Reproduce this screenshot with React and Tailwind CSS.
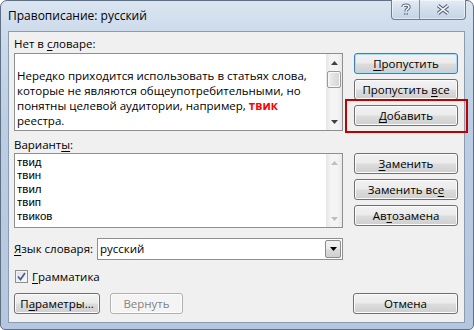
import React from "react";

const font = { fontFamily: '"Segoe UI", "Open Sans", "Liberation Sans", sans-serif' };

function Btn({ children, className = "", primary, disabled }) {
  const border = primary
    ? "border-[#3c7fb1] shadow-[inset_0_0_0_1px_#a8def9]"
    : disabled
    ? "border-[#adb2b5] shadow-[inset_0_0_0_1px_#fcfcfc]"
    : "border-[#707070] shadow-[inset_0_0_0_1px_#fbfbfb]";
  const bg = disabled
    ? "bg-[#f4f4f4] text-[#838383]"
    : "bg-[linear-gradient(#f2f2f2_0%,#ebebeb_48%,#dddddd_52%,#cfcfcf_100%)] text-black";
  return (
    <div
      className={`flex items-center justify-center whitespace-nowrap rounded-[3px] border text-[11.5px] leading-none ${border} ${bg} ${className}`}
    >
      {children}
    </div>
  );
}

function U({ children }) {
  return <span className="underline underline-offset-[2px] decoration-1">{children}</span>;
}

function Arrow({ up, color = "#404040" }) {
  return (
    <svg width="7" height="4" viewBox="0 0 7 4">
      {up ? (
        <path d="M0 4 L3.5 0 L7 4 Z" fill={color} />
      ) : (
        <path d="M0 0 L3.5 4 L7 0 Z" fill={color} />
      )}
    </svg>
  );
}

function ScrollBar({ disabled }) {
  return (
    <div className="flex h-full w-[16px] flex-col bg-[linear-gradient(to_right,#e6e6e6,#f4f4f4_30%,#f4f4f4_70%,#e9e9e9)]">
      <div className="flex h-[17px] items-center justify-center">
        <Arrow up color={disabled ? "#bfbfbf" : "#404040"} />
      </div>
      {!disabled && (
        <div className="mx-[1px] h-[17px] rounded-[2px] border border-[#9a9a9a] bg-[linear-gradient(to_right,#f1f1f1,#e0e0e0_50%,#d6d6d6)] shadow-[inset_0_0_0_1px_#f8f8f8]" />
      )}
      <div className="flex-1" />
      <div className="flex h-[17px] items-center justify-center">
        <Arrow color={disabled ? "#bfbfbf" : "#404040"} />
      </div>
    </div>
  );
}

export default function App() {
  return (
    <div className="h-[330px] w-[474px] bg-white" style={font}>
      <div className="relative flex h-[330px] w-[474px] flex-col rounded-t-[7px] rounded-b-[5px] border border-[#5f6f84] bg-[linear-gradient(to_bottom,#dbe5f1,#cddbeb_30px,#bccee3_120px,#b4c7de)]">
        {/* title bar */}
        <div className="flex h-[30px] items-center pl-[7px] text-[12px] text-black">
          Правописание: русский
        </div>
        <div className="absolute right-[7px] top-[-1px] flex h-[20px] overflow-hidden rounded-b-[4px] border border-t-0 border-[#6d7c90] bg-[linear-gradient(to_bottom,#e4ecf5,#d2deec_50%,#c4d3e5)] shadow-[inset_0_0_0_1px_rgba(255,255,255,0.5)]">
          <div className="flex w-[28px] items-center justify-center border-r border-[#8392a6]">
            <svg width="10" height="13" viewBox="0 0 10 13">
              <path d="M2 4 C2 1.5 8 1.5 8 4 C8 6 5 6 5 8.5" fill="none" stroke="#5a6a80" strokeWidth="3.4" />
              <path d="M5 10 L5 12" fill="none" stroke="#5a6a80" strokeWidth="3.4" />
              <path d="M2 4 C2 1.5 8 1.5 8 4 C8 6 5 6 5 8.5" fill="none" stroke="#ffffff" strokeWidth="1.4" />
              <path d="M5 10.2 L5 11.8" fill="none" stroke="#ffffff" strokeWidth="1.4" />
            </svg>
          </div>
          <div className="flex w-[45px] items-center justify-center">
            <svg width="14" height="11" viewBox="0 0 14 11">
              <path d="M2 1.5 L12 9.5 M12 1.5 L2 9.5" stroke="#5a6a80" strokeWidth="3.6" />
              <path d="M2 1.5 L12 9.5 M12 1.5 L2 9.5" stroke="#ffffff" strokeWidth="1.6" />
            </svg>
          </div>
        </div>

        {/* client area */}
        <div className="ml-[7px] mr-[8px] h-[292px] border border-[#8b9cb1] bg-[#f0f0f0] pl-[5px] pt-[4px] text-[11.5px] text-black">
          {/* row 1 */}
          <div className="flex gap-[11px]">
            <div className="w-[329px]">
              <div className="h-[16px] leading-[16px]">
                Нет в <U>с</U>ловаре:
              </div>
              <div className="mt-[1px] flex h-[78px] border border-[#8e8f8f] bg-white">
                <div className="flex-1 whitespace-nowrap pl-[2px] pt-[14px] leading-[15px]">
                  <div>Нередко приходится использовать в статьях слова,</div>
                  <div>которые не являются общеупотребительными, но</div>
                  <div>
                    понятны целевой аудитории, например,{" "}
                    <span className="font-bold text-[#ff0000]">твик</span>
                  </div>
                  <div>реестра.</div>
                </div>
                <ScrollBar />
              </div>
            </div>
            <div className="flex w-[104px] flex-col gap-[5px] pt-[17px]">
              <Btn primary className="h-[21px]">
                <U>П</U>ропустить
              </Btn>
              <Btn className="h-[21px]">
                Пропустить&nbsp;<U>в</U>се
              </Btn>
              <Btn className="h-[21px]">
                <U>Д</U>обавить
              </Btn>
            </div>
          </div>

          {/* row 2 */}
          <div className="mt-[6px] flex gap-[11px]">
            <div className="w-[329px]">
              <div className="h-[16px] leading-[16px]">
                Вариант<U>ы</U>:
              </div>
              <div className="flex h-[75px] border border-[#8e8f8f] bg-white">
                <div className="flex-1 pl-[2px] pt-[2px] font-['Liberation_Sans',sans-serif] text-[11.5px] leading-[13.4px]">
                  <div>твид</div>
                  <div>твин</div>
                  <div>твил</div>
                  <div>твип</div>
                  <div>твиков</div>
                </div>
                <ScrollBar disabled />
              </div>
            </div>
            <div className="flex w-[104px] flex-col gap-[5px] pt-[16px]">
              <Btn className="h-[21px]">
                <U>З</U>аменить
              </Btn>
              <Btn className="h-[21px]">
                Заменить&nbsp;вс<U>е</U>
              </Btn>
              <Btn className="h-[21px]">
                Ав<U>т</U>озамена
              </Btn>
            </div>
          </div>

          {/* language */}
          <div className="mt-[10px] flex h-[22px] w-[329px] items-center">
            <div className="w-[83px] whitespace-nowrap">
              <U>Я</U>зык словаря:
            </div>
            <div className="flex h-[22px] flex-1 items-center border border-[#8e8f8f] bg-white">
              <div className="flex-1 pl-[2px]">русский</div>
              <div className="mr-[1px] flex h-[18px] w-[16px] items-center justify-center rounded-[2px] border border-[#8c8c8c] bg-[linear-gradient(#f2f2f2,#ebebeb_50%,#dddddd_51%,#cfcfcf)]">
                <Arrow color="#000000" />
              </div>
            </div>
          </div>

          {/* grammar */}
          <div className="mt-[10px] flex h-[13px] items-center gap-[4px] pl-[1px]">
            <div className="flex h-[13px] w-[13px] items-center justify-center border border-[#8e8f8f] bg-[linear-gradient(135deg,#dcdcdc,#ffffff)] shadow-[inset_0_0_0_1px_#f4f4f4]">
              <svg width="9" height="9" viewBox="0 0 9 9">
                <path d="M1 4.5 L3.5 7.5 L8 1" fill="none" stroke="#4a5f97" strokeWidth="1.8" />
              </svg>
            </div>
            <div>
              <U>Г</U>рамматика
            </div>
          </div>

          {/* bottom buttons */}
          <div className="mt-[10px] flex h-[21px] items-stretch">
            <Btn className="w-[86px]">
              П<U>а</U>раметры...
            </Btn>
            <Btn disabled className="ml-[10px] w-[73px]">
              Вернуть
            </Btn>
            <div className="flex-1" />
            <Btn className="mr-[6px] w-[105px]">Отмена</Btn>
          </div>
        </div>

        {/* highlight annotation */}
        <div className="pointer-events-none absolute left-[344px] top-[98px] h-[34px] w-[123px] border-2 border-[#c00000]" />
      </div>
    </div>
  );
}
